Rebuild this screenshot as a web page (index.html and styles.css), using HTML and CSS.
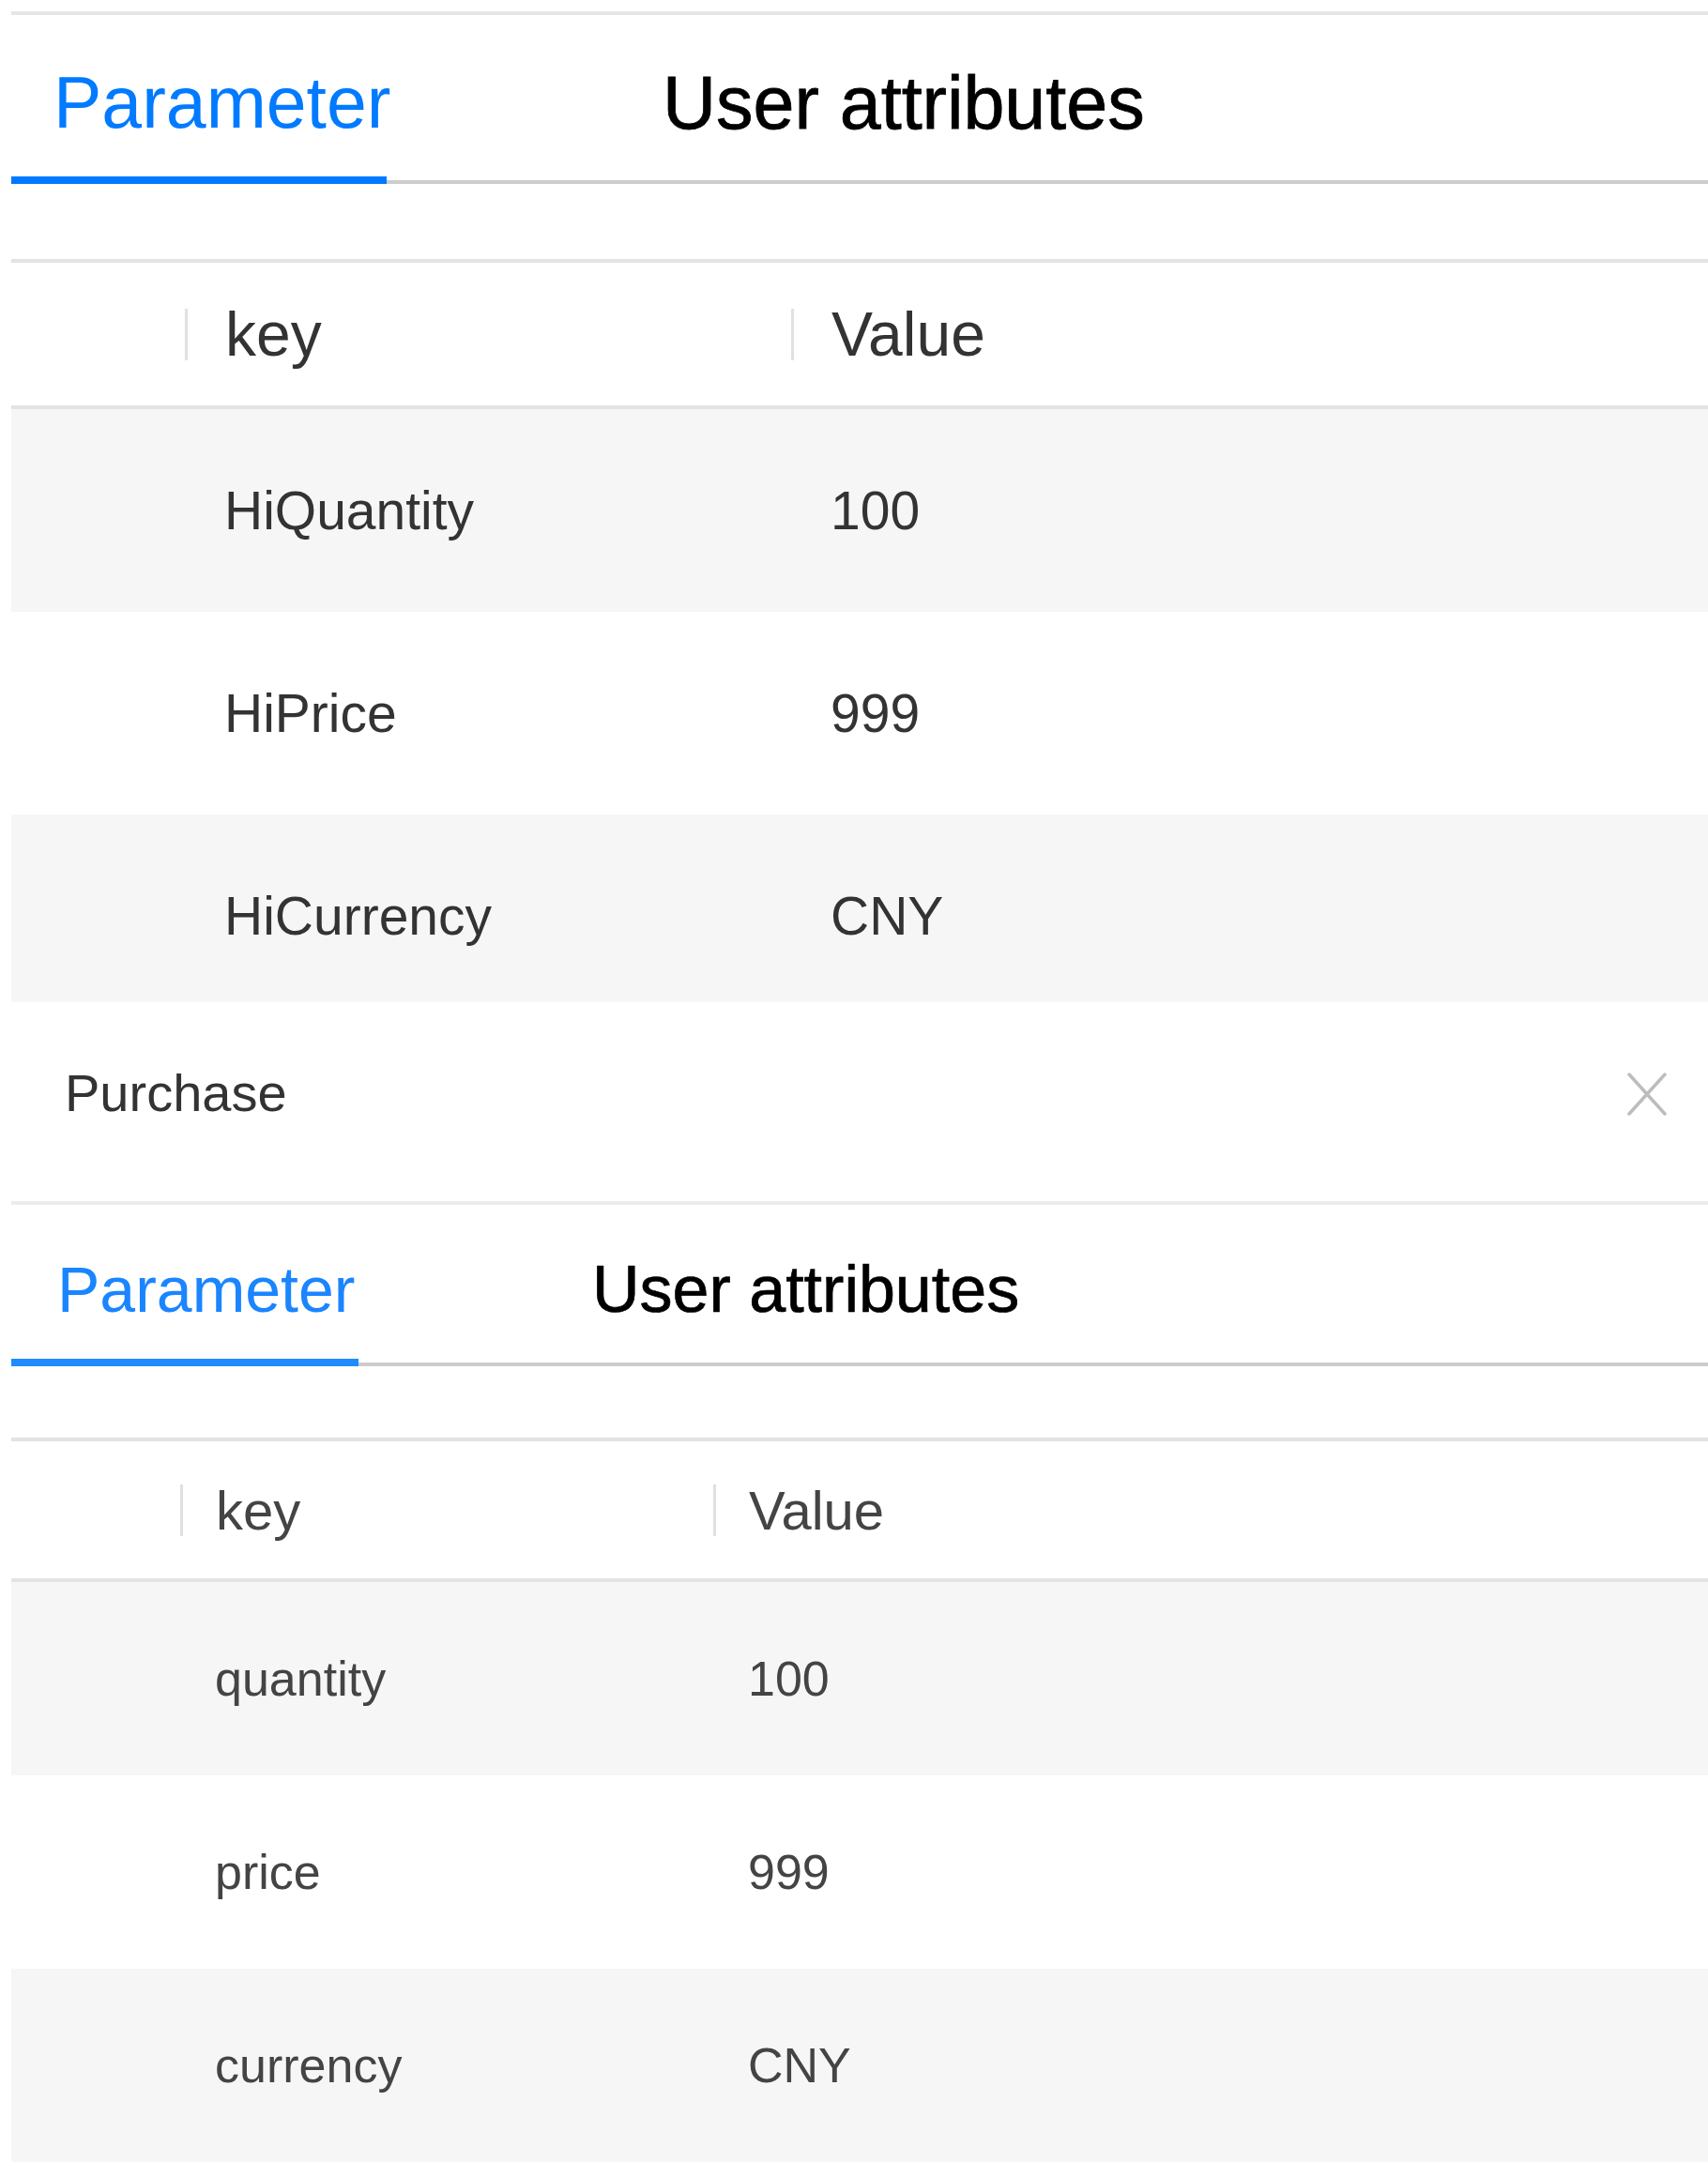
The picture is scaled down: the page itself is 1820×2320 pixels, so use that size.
FILE: index.html
```html
<!DOCTYPE html>
<html lang="en">
<head>
<meta charset="utf-8">
<title>Event parameters</title>
<link rel="stylesheet" href="styles.css">
</head>
<body>
<div class="page">
  <div class="topline"></div>

  <div class="tabs tabs-a">
    <div class="tab active">Parameter</div>
    <div class="tab other">User attributes</div>
  </div>

  <div class="table table-a">
    <div class="thead">
      <div></div>
      <div class="th"><span class="sep"></span>key</div>
      <div class="th"><span class="sep"></span>Value</div>
    </div>
    <div class="tr odd"><div></div><div class="td">HiQuantity</div><div class="td">100</div></div>
    <div class="tr"><div></div><div class="td">HiPrice</div><div class="td">999</div></div>
    <div class="tr odd cut"><div></div><div class="td">HiCurrency</div><div class="td">CNY</div></div>
  </div>

  <div class="event">
    <span class="event-name">Purchase</span>
    <svg class="close" width="42" height="46" viewBox="0 0 42 46" aria-label="close">
      <path d="M2 2 L40 44 M40 2 L2 44" stroke="#bdbdbd" stroke-width="3.5" fill="none" stroke-linecap="round"/>
    </svg>
  </div>

  <div class="tabs tabs-b">
    <div class="tab active">Parameter</div>
    <div class="tab other">User attributes</div>
  </div>

  <div class="table table-b">
    <div class="thead">
      <div></div>
      <div class="th"><span class="sep"></span>key</div>
      <div class="th"><span class="sep"></span>Value</div>
    </div>
    <div class="tr odd"><div></div><div class="td">quantity</div><div class="td">100</div></div>
    <div class="tr"><div></div><div class="td">price</div><div class="td">999</div></div>
    <div class="tr odd"><div></div><div class="td">currency</div><div class="td">CNY</div></div>
  </div>
</div>
</body>
</html>
```

FILE: styles.css
```css
* { box-sizing: border-box; }

html, body {
  margin: 0;
  padding: 0;
  background: #ffffff;
}

body {
  font-family: "Liberation Sans", Arial, sans-serif;
  color: #333333;
}

.page {
  padding: 12px 0 0 12px;
  width: 1820px;
}

.topline {
  height: 0;
  border-top: 4px solid #e6e6e6;
}

/* ---------- tabs ---------- */
.tabs {
  display: flex;
  align-items: flex-start;
  border-bottom: 4px solid #cccccc;
  white-space: nowrap;
}

.tab {
  color: #000000;
}

.tab.active {
  border-bottom: 8px solid #007aff;
  margin-bottom: -4px;
  color: #007aff;
}

.tabs-a .tab {
  font-size: 77px;
  line-height: 77px;
  padding: 55px 0 40px 0;
}
.tabs-a .tab.active {
  width: 400px;
  padding-left: 45px;
}
.tabs-a .tab.other {
  font-size: 79px;
  margin-left: 294px;
  -webkit-text-stroke: 0.8px #000000;
}

.tabs-b .tab {
  font-size: 68px;
  line-height: 68px;
  padding: 56px 0 40px 0;
}
.tabs-b .tab.active {
  width: 370px;
  padding-left: 49px;
  border-bottom-color: #1e8bff;
  color: #1a85ff;
}
.tabs-b .tab.other {
  font-size: 70px;
  margin-left: 249px;
  -webkit-text-stroke: 0.7px #000000;
}

/* ---------- tables ---------- */
.table {
  border-top: 4px solid #e3e3e3;
}

.thead, .tr {
  display: grid;
  align-items: center;
}

.thead {
  border-bottom: 4px solid #e3e3e3;
}

.th {
  display: flex;
  align-items: center;
  white-space: nowrap;
}

.sep {
  display: block;
  width: 3px;
  height: 55px;
  background: #e0e0e0;
}

.td {
  white-space: nowrap;
}

.tr.odd {
  background: #f6f6f6;
}

/* first table */
.table-a {
  margin-top: 80px;
}
.table-a .thead,
.table-a .tr {
  grid-template-columns: 185px 646px 1fr;
}
.table-a .thead {
  height: 156px;
  font-size: 66px;
}
.table-a .sep {
  margin-right: 40px;
}
.table-a .tr {
  height: 216px;
  font-size: 57px;
}
.table-a .td {
  padding-left: 42px;
}
.table-a .tr.cut {
  height: 200px;
  padding-top: 16px;
}

/* event row */
.event {
  height: 216px;
  display: flex;
  align-items: center;
  justify-content: space-between;
  padding: 0 44px 20px 57px;
  border-bottom: 4px solid #ececec;
  font-size: 56px;
  color: #333333;
}

.close {
  display: block;
  margin-top: 3px;
}

/* second table */
.table-b {
  margin-top: 76px;
}
.table-b .thead,
.table-b .tr {
  grid-template-columns: 180px 568px 1fr;
}
.table-b .thead {
  height: 150px;
  font-size: 58px;
  color: #444444;
}
.table-b .sep {
  margin-right: 35px;
}
.table-b .tr {
  height: 206px;
  font-size: 52px;
  color: #444444;
}
.table-b .td {
  padding-left: 37px;
}
```
